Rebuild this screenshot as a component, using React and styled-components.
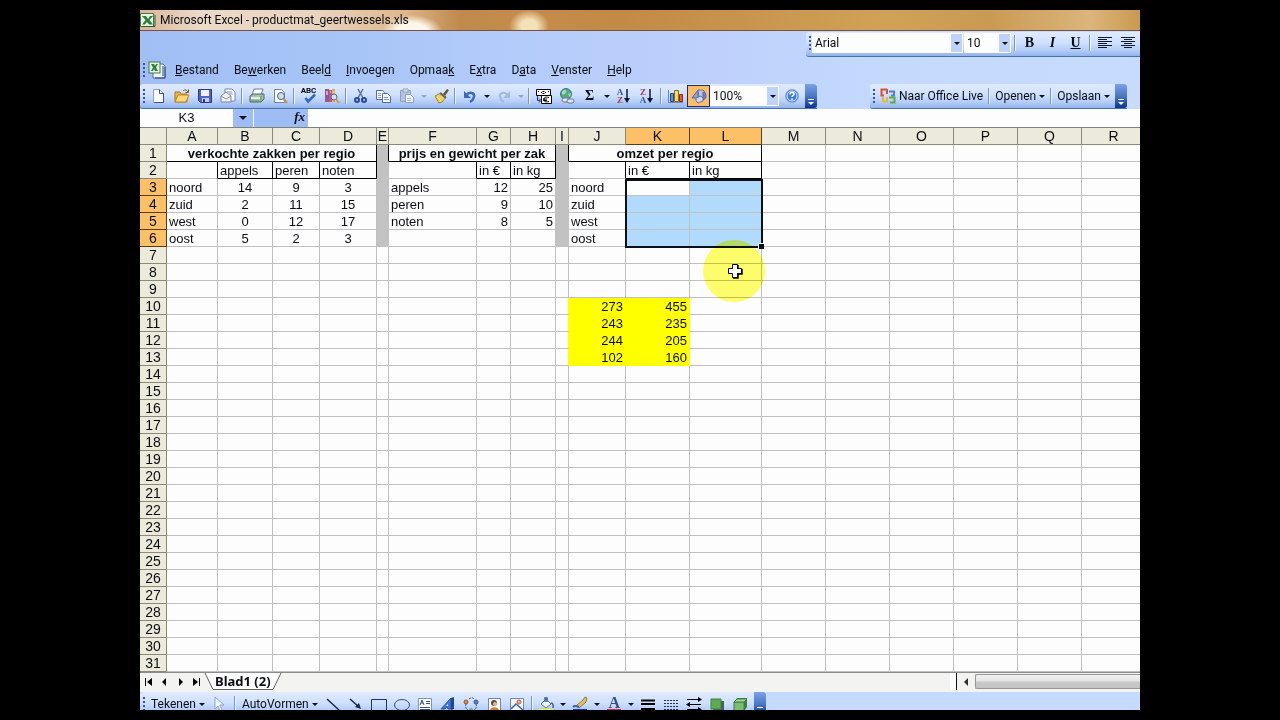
import React from 'react';
import styled, { createGlobalStyle, css } from 'styled-components';

const UI_FONT = "Roboto, 'Open Sans', sans-serif";
const SHEET_FONT = "'Liberation Sans', Arial, sans-serif";

const GlobalStyle = createGlobalStyle`
  *, *::before, *::after {
    box-sizing: border-box;
  }
  body {
    margin: 0;
    background: #000;
    font-family: ${UI_FONT};
    font-size: 12px;
    color: #0a0e14;
  }
  button, input, select {
    font: inherit;
    color: inherit;
    margin: 0;
    padding: 0;
    border: 0;
    background: none;
  }
`;

// Window
const Screen = styled.div`
  height: 100vh;
  padding: 10px 140px;
`;

const Window = styled.main`
  display: flex;
  flex-direction: column;
  height: 100%;
  overflow: hidden;
  background: #fdfdfd;
`;

const TitleBar = styled.header`
  display: flex;
  align-items: center;
  gap: 4px;
  flex: none;
  height: 21px;
  border-bottom: 1px solid #7a5140;
  background:
    radial-gradient(ellipse 30px 16px at 272px 21px, #fdf6ea 50%, transparent),
    radial-gradient(ellipse 20px 16px at 389px 16px, #f3e2b8 40%, transparent),
    linear-gradient(90deg, #d9b596 0, #ecdac8 60px, #e9d3bd 180px, #dfb98f 260px, #bf8a4c 320px, #c48c4c 370px, #c38a45 480px, #c8944d 60%, #d0a257 75%, #c99a52 85%, #dcb57c 95%, #c9994f 100%);
`;

const Title = styled.h1`
  margin: 0;
  font-size: 12px;
  font-weight: 400;
  line-height: 20px;
  white-space: nowrap;
`;

const Commands = styled.div`
  flex: none;
  background: linear-gradient(90deg, #a1bff4 0, #a8c5f7 22%, #b4ccfa 38%, #bdcffb 55%, #c4dafd 75%, #c6dbfd 100%);
`;

const FormatRow = styled.div`
  display: flex;
  justify-content: flex-end;
  height: 27px;
  padding-top: 1px;
`;

const MenuRow = styled.nav`
  display: flex;
  align-items: center;
  height: 26px;
  padding: 0 0 2px 3px;
`;

const MenuButton = styled.button`
  padding: 0 7px 0 8px;
  line-height: 20px;
  white-space: nowrap;
`;

const BookIcon = styled.span`
  display: flex;
  margin: 0 1px 0 3px;
`;

const ToolRow = styled.div`
  display: flex;
  justify-content: space-between;
  height: 25px;
  padding-right: 13px;
`;

const Toolbar = styled.div`
  display: flex;
  align-items: center;
  flex: none;
  height: 25px;
  padding: ${p => (p.$floating ? '0 1px 2px 3px' : '0 0 0 3px')};
  border-radius: 3px 0 0 3px;
  border-bottom: 1px solid #4a70b4;
  background: linear-gradient(180deg, #dfeafe 0, #cfe0fd 45%, #b4cdf8 75%, #92b3ec 100%);
`;

const DrawBar = styled.div`
  flex: none;
  height: 18px;
  overflow: hidden;
  display: flex;
  align-items: flex-start;
  background: #c5dafc;
`;

const Grip = styled.span`
  flex: none;
  width: 2px;
  height: 15px;
  margin-right: ${p => p.$after || 0}px;
  background: repeating-linear-gradient(180deg, #34559c 0 2px, transparent 2px 4px);
`;

const ToolButton = styled.button`
  display: flex;
  align-items: center;
  justify-content: center;
  flex: none;
  width: 23px;
  height: 22px;
  ${p => p.$active && css`
    border: 1px solid #1a2c74;
    background: #fdbd69;
  `}
`;

const DropButton = styled.button`
  display: flex;
  align-items: center;
  justify-content: center;
  flex: none;
  width: 11px;
  height: 20px;
`;

const TextButton = styled.button`
  display: flex;
  align-items: center;
  gap: 3px;
  padding: 0 ${p => p.$pad || 3}px;
  line-height: 14px;
  white-space: nowrap;
`;

const Separator = styled.span`
  flex: none;
  width: 6px;
  height: 16px;
  background: linear-gradient(90deg, transparent 2px, #7595ce 2px 3px, #f0f5ff 3px 4px, transparent 4px);
`;

const EndCap = styled.button`
  display: flex;
  align-items: flex-end;
  justify-content: center;
  align-self: stretch;
  width: 12px;
  margin-left: 2px;
  padding-bottom: 2px;
  border-radius: 0 3px 3px 0;
  background: linear-gradient(180deg, #7ba2e7 0, #4b77c4 50%, #0d3488 100%);
`;

const Combo = styled.span`
  display: flex;
  width: ${p => p.$width}px;
  height: 20px;
  margin-right: 1px;
  background: #fdfdfd;
  border: 1px solid #fdfdfd;
`;

const ComboInput = styled.input`
  flex: 1;
  min-width: 0;
  padding-left: 2px;
  line-height: 18px;
`;

const ComboArrow = styled.button`
  display: flex;
  align-items: center;
  justify-content: center;
  width: 11px;
  background: #bdd3fa;
`;

const Letter = styled.span`
  font-family: 'Liberation Serif', serif;
  font-size: 14px;
  line-height: 16px;
  font-weight: 700;
  font-style: ${p => (p.$italic ? 'italic' : 'normal')};
  text-decoration: ${p => (p.$underline ? 'underline' : 'none')};
`;

// Formula bar
const FormulaBar = styled.div`
  display: flex;
  flex: none;
  height: 18px;
  background: #9fbdf5;
`;

const NameBox = styled.input`
  width: 93px;
  padding-bottom: 2px;
  background: #fdfdfd;
  font-family: ${SHEET_FONT};
  font-size: 13px;
  text-align: center;
`;

const NameArrow = styled.button`
  display: flex;
  align-items: center;
  justify-content: center;
  width: 21px;
  border-right: 1px solid #f4f8ff;
`;

const FxButton = styled.button`
  width: 54px;
  padding: 0 3px 2px 0;
  text-align: right;
  font-family: 'Liberation Serif', serif;
  font-size: 13px;
  font-style: italic;
  font-weight: 700;
  line-height: 16px;
`;

const FormulaInput = styled.input`
  flex: 1;
  min-width: 0;
  background: #fdfdfd;
  padding: 0 4px;
`;

// Sheet
const Sheet = styled.section`
  position: relative;
  flex: 1;
  min-height: 0;
  overflow: hidden;
  border-top: 1px solid #808078;
`;

const Grid = styled.table`
  table-layout: fixed;
  width: 100%;
  border-collapse: separate;
  border-spacing: 0;
  font-family: ${SHEET_FONT};
  font-size: 13px;
  line-height: 14px;
`;

const HeadCell = styled.th`
  height: 17px;
  padding: 0;
  font-size: 14px;
  font-weight: 400;
  line-height: 16px;
  text-align: center;
  border-right: 1px solid #8a8a7c;
  border-bottom: 1px solid #8a8a7c;
  background: #ecebdb;
  ${p => p.$on && css`
    background: #fcc167;
    border-color: #5a3c14;
  `}
`;

const fills = {
  gray: '#c2c2c2',
  yellow: '#ffff00',
  selected: '#b2dafc',
};

const Cell = styled.td`
  position: relative;
  height: 17px;
  padding: 2px 2px 0;
  overflow: visible;
  white-space: nowrap;
  text-align: ${p => p.$align || 'left'};
  font-weight: ${p => (p.$title ? 700 : 400)};
  background: ${p => fills[p.$fill] || '#fdfdfd'};
  border-right: 1px solid ${p => p.$right};
  border-bottom: 1px solid ${p => p.$bottom};
`;

const frame = '2px solid #0c1018';

// Each selected cell draws only the outer sides it lies on
const SelectionEdge = styled.span`
  position: absolute;
  z-index: 1;
  top: 0;
  left: -1px;
  right: ${p => (p.$side === 'right' ? -2 : -1)}px;
  bottom: ${p => (p.$last ? -2 : -1)}px;
  pointer-events: none;
  border-left: ${p => (p.$side === 'left' ? frame : 'none')};
  border-right: ${p => (p.$side === 'right' ? frame : 'none')};
  border-top: ${p => (p.$first ? frame : 'none')};
  border-bottom: ${p => (p.$last ? frame : 'none')};
`;

const FillHandle = styled.span`
  position: absolute;
  z-index: 2;
  right: -3px;
  bottom: -3px;
  width: 6px;
  height: 6px;
  background: #0c1030;
  border-top: 1px solid #fdfdfd;
  border-left: 1px solid #fdfdfd;
`;

const Spotlight = styled.div`
  position: absolute;
  z-index: 3;
  left: 563px;
  top: 112px;
  width: 62px;
  height: 62px;
  border-radius: 50%;
  background: #ffff6c;
  mix-blend-mode: multiply;
`;

const Pointer = styled.svg`
  position: absolute;
  z-index: 4;
  left: 587px;
  top: 135px;
`;

// Sheet tabs
const TabBar = styled.div`
  display: flex;
  flex: none;
  height: 20px;
  padding-bottom: 2px;
  border-top: 1px solid #8c8c8c;
  background: #f3f3f2;
`;

const TabNav = styled.button`
  display: flex;
  align-items: center;
  justify-content: center;
  width: 16px;
`;

const TabStrip = styled.div`
  display: flex;
  flex: 1;
  min-width: 0;
  border-right: 6px solid #fdfdfd;
`;

const Tab = styled.button`
  padding: 0 1px;
  background: #fdfdfd;
  border-bottom: 1px solid #606060;
  font-family: 'Noto Sans', sans-serif;
  font-size: 13px;
  font-weight: 700;
  line-height: 16px;
  white-space: nowrap;
`;

const ScrollArea = styled.div`
  display: flex;
  width: 184px;
  border-left: 1px solid #101010;
`;

const ScrollArrow = styled.button`
  display: flex;
  align-items: center;
  justify-content: center;
  width: 18px;
`;

const ScrollThumb = styled.div`
  flex: 1;
  margin: 1px 0;
  border: 1px solid #979797;
  border-right: 0;
  border-radius: 2px 0 0 2px;
  background: linear-gradient(180deg, #f2f2f2 0, #e4e4e4 48%, #cacaca 52%, #c4c4c4 100%);
`;

// Small arrow shared by every drop-down
const Down = ({ color = '#0a1020', size = 6 }) => (
  <svg width={size} height={size / 2} viewBox="0 0 6 3" aria-hidden="true">
    <path d="M0 0h6L3 3z" fill={color} />
  </svg>
);

const CapMark = () => (
  <svg width="8" height="8" viewBox="0 0 8 8" aria-hidden="true">
    <path d="M1 1.500h6" stroke="#fff" />
    <path d="M1 4h6L4 7z" fill="#fff" />
  </svg>
);

const icons = {
  excel: (
    <>
      <path d="M.5 1.500h13v13H.5z" fill="#eaf4e6" stroke="#3f7d45" />
      <path d="M2 4h4l2 3 2-3h3L9.500 8l3.500 4.500H9L7 10l-2 2.500H2L5.500 8z" fill="#2b8038" />
      <path d="M2 14.500h13V3" fill="none" stroke="#2c5c34" />
    </>
  ),
  book: (
    <>
      <path d="M5 3h10l2 2v12H5z" fill="#eef3fd" stroke="#5271a8" />
      <path d="M15 5v10M17 6v11H7" stroke="#27467c" fill="none" />
      <rect x="1" y="1" width="11" height="11" fill="#e6f3e2" stroke="#3f7d45" />
      <path d="M3 3h3l1 2 1-2h2L8 6.500 10 10H7L6 8l-1 2H3l2-3.500z" fill="#2b8038" />
    </>
  ),
  newDoc: (
    <>
      <path d="M2.500 1.500h6l4 4v9h-10z" fill="#fff" stroke="#8aa0c8" />
      <path d="M8.500 1.500v4h4M12.500 5v9.500h-9" fill="none" stroke="#33548e" />
    </>
  ),
  open: (
    <>
      <path d="M1 4h5l1 2h6v8H1z" fill="#e9b54a" stroke="#a87824" />
      <path d="M1 14l3-7h11l-3 7z" fill="#ffd978" stroke="#b98527" />
      <path d="M9 3c2-2 4-1 5 1M14.500 1.500v3h-3" fill="none" stroke="#7a4d1c" />
    </>
  ),
  save: (
    <>
      <path d="M1.500 1.500h13v13h-11l-2-2z" fill="#5264c4" stroke="#2c3684" />
      <path d="M4 2h8v6H4z" fill="#eef2ff" />
      <path d="M5 10h7v4H5z" fill="#c6cdea" />
      <path d="M6 11h2v3H6z" fill="#2c3684" />
    </>
  ),
  mail: (
    <>
      <path d="M5 1h7l3 3v9H5z" fill="#fff" stroke="#7187ad" />
      <path d="M1 8l5-4 5 4v6H1z" fill="#f5f0e8" stroke="#7187ad" />
      <path d="M1 8l5 3 5-3M7 4h5M9 6h4" fill="none" stroke="#8a93a8" />
    </>
  ),
  print: (
    <>
      <path d="M5 1h9l-2 6H3z" fill="#fff" stroke="#6d7f8c" />
      <path d="M1 8l3-2h11v5l-3 3H1z" fill="#a9c0b0" stroke="#4c6468" />
      <path d="M2 9h9v2H2z" fill="#e7efe6" />
      <path d="M2 13h8M12 8v5" stroke="#4aa14a" />
    </>
  ),
  preview: (
    <>
      <path d="M2.500 1.500h7l3 3v10h-10z" fill="#fff" stroke="#6f86b4" />
      <circle cx="9" cy="8" r="3.500" fill="#cfdff0" stroke="#51617c" />
      <path d="M11.500 11l3.500 4" stroke="#c98f4c" strokeWidth="2" />
    </>
  ),
  spell: <path d="M4 8l3 4 8-8" fill="none" stroke="#3468c8" strokeWidth="3" />,
  research: (
    <>
      <path d="M1 1h4v13H1z" fill="#8a5a9a" />
      <path d="M5 2h3v12H5z" fill="#c5567a" />
      <path d="M8 1h3v13H8z" fill="#d7b25c" />
      <path d="M2 4h2M2 6h2M6 4h1M9 4h1" stroke="#fff" />
      <circle cx="10" cy="9" r="3" fill="#cfe0f2" stroke="#586884" />
      <path d="M12 11l3 4" stroke="#d09a40" strokeWidth="2" />
    </>
  ),
  cut: (
    <>
      <path d="M5 1l5 9M10 1L5 10" stroke="#5c7297" strokeWidth="1.500" />
      <circle cx="4" cy="12" r="2" fill="none" stroke="#28489c" strokeWidth="2" />
      <circle cx="11" cy="12" r="2" fill="none" stroke="#28489c" strokeWidth="2" />
    </>
  ),
  copy: (
    <>
      <path d="M.5 2.500h6l2 2v7h-8z" fill="#fff" stroke="#4d6ba6" />
      <path d="M6.500 5.500h5l3 3v6h-8z" fill="#fff" stroke="#4d6ba6" />
      <path d="M2 5.500h3M2 7.500h3M2 9.500h3M8 9.500h4M8 11.500h5" stroke="#7c9ad0" />
    </>
  ),
  paste: (
    <>
      <path d="M1.500 2.500h10v11h-10z" fill="#b6c3de" stroke="#8f9fc0" />
      <path d="M4 1h5v3H4z" fill="#dbe3f3" stroke="#8f9fc0" />
      <path d="M6.500 6.500h5l3 3v5h-8z" fill="#edf2fc" stroke="#8f9fc0" />
      <path d="M8 10.500h4M8 12.500h4" stroke="#a7b4d0" />
    </>
  ),
  brush: (
    <>
      <path d="M10 6l4-5 2 1-4 6z" fill="#6b5530" />
      <path d="M2 8l6-3 5 4-4 5-3 1z" fill="#f2d257" stroke="#a98520" />
      <path d="M7 5l6 5" stroke="#596380" strokeWidth="2" />
      <path d="M4 9l4 4" stroke="#fff3b0" />
    </>
  ),
  undo: (
    <>
      <path d="M4 7c4-4 9-2 8 2-.5 2-2 4-4 5" fill="none" stroke="#3a68c6" strokeWidth="2.500" />
      <path d="M2 3v7h7z" fill="#3a68c6" />
    </>
  ),
  redo: (
    <>
      <path d="M12 7c-4-4-9-2-8 2 .5 2 2 4 4 5" fill="none" stroke="#a2b8de" strokeWidth="2" />
      <path d="M14 3v7H7z" fill="#a2b8de" />
    </>
  ),
  euro: (
    <>
      <path d="M.5 1.500h14v6H.5z" fill="#fff" stroke="#000" />
      <path d="M5 4.500h1M9 4.500h1M6.500 3.500h2M6.500 5.500h2M2 3.500h1M12 3.500h1" stroke="#000" />
      <path d="M5.500 7.500h10v8h-10z" fill="#fff" stroke="#000" />
      <path d="M13 9.500c-4-1-5 0-5 2s1 3 5 2M7 11h4M7 12.500h4" fill="none" stroke="#000" />
      <path d="M1.500 8v4.500H4M3 10.500l2 2-2 2" fill="none" stroke="#1c2f9c" />
    </>
  ),
  link: (
    <>
      <circle cx="7" cy="6" r="5.500" fill="#5aa882" stroke="#37759a" />
      <path d="M3 4c2-3 5-2 4 0s-2 3-4 2zM9 6l3-1-1 4z" fill="#a9dfb0" />
      <rect x="3" y="10" width="7" height="4" rx="2" fill="#dfe6f2" stroke="#6b7b98" />
      <rect x="8" y="11" width="7" height="4" rx="2" fill="#dfe6f2" stroke="#6b7b98" />
    </>
  ),
  chart: (
    <>
      <path d="M.5 2v12.500H15" fill="none" stroke="#7085a8" />
      <path d="M2.500 5.500h3v8h-3z" fill="#5d8de0" stroke="#274a94" />
      <path d="M6.500 2.500h4v11h-4z" fill="#f6dc5e" stroke="#8a6e14" />
      <path d="M11.500 6.500h3v7h-3z" fill="#e05a3c" stroke="#8c2c18" />
    </>
  ),
  drawing: (
    <>
      <path d="M1 10l6-8v8z" fill="#8fa4dc" stroke="#5467a4" />
      <path d="M7 2h5l2 2v6H8z" fill="#b9c4dc" stroke="#6675a0" />
      <path d="M12 4c4 1 4 7 0 8z" fill="#6f87cc" stroke="#5467a4" />
      <path d="M5 10l5-2 2 2v3l-5 2-2-2z" fill="#cfd7ec" stroke="#6675a0" />
    </>
  ),
  help: (
    <>
      <circle cx="8" cy="8" r="6.500" fill="#3f7ddc" stroke="#8aa8dc" />
      <circle cx="8" cy="8" r="5" fill="none" stroke="#dce9ff" />
      <path d="M6 6.500c0-3 4-2.500 4-.5 0 1.500-2 1.500-2 3M8 10.500v1.500" fill="none" stroke="#fff" strokeWidth="1.500" />
    </>
  ),
  office: (
    <>
      <path d="M7 1.500H1.500v6H4M7 1v5" fill="none" stroke="#e0502c" strokeWidth="2" />
      <path d="M9 3.500h5v4h-3" fill="none" stroke="#4784d4" strokeWidth="2" />
      <path d="M3 9v4.500h4V9" fill="none" stroke="#eab83a" strokeWidth="2" />
      <path d="M9 9.500h5.500v5H10" fill="none" stroke="#62a944" strokeWidth="2" />
    </>
  ),
  left: <path d="M1 2.500h14M1 4.500h9M1 6.500h14M1 8.500h9M1 10.500h14M1 12.500h9" stroke="#10182c" />,
  center: <path d="M1 2.500h14M4 4.500h8M1 6.500h14M4 8.500h8M1 10.500h14M4 12.500h8" stroke="#10182c" />,
  cursor: <path d="M3 1v12l3-3 2 5 2-1-2-5h4z" fill="#f2f6ff" stroke="#8ea3cc" />,
  line: <path d="M2 3l12 11" stroke="#1c2740" strokeWidth="1.500" />,
  arrow: (
    <>
      <path d="M2 3l9 8" stroke="#1c2740" strokeWidth="1.500" />
      <path d="M13 13l-6-2 4-4z" fill="#1c2740" />
    </>
  ),
  rect: <path d="M.5 3.500h15v11H.5z" fill="none" stroke="#1c3468" />,
  ellipse: <ellipse cx="8" cy="9" rx="7.500" ry="5.500" fill="none" stroke="#3a4c78" />,
  textbox: (
    <>
      <path d="M1.500 2.500h13v12h-13z" fill="#fff" stroke="#8295bd" />
      <path d="M3 9l2-5 2 5M4 7h2M9 5.500h4M9 7.500h4M3 11.500h10M3 13.500h10" fill="none" stroke="#33528e" />
    </>
  ),
  wordart: (
    <>
      <path d="M1 13L11 2v11H8l-1-2-2 2z" fill="#3f79dc" stroke="#2451a4" />
      <path d="M11 2l3-1v12l-3 1z" fill="#23468c" />
      <path d="M8 8v2H6z" fill="#dce9ff" />
    </>
  ),
  diagram: (
    <>
      <path d="M6 3c2-1.500 4-1.500 5 0M3 8c-1 3 0 5 2 6M13 8c1 3 0 5-2 6" fill="none" stroke="#35558f" strokeDasharray="2 1" />
      <circle cx="3" cy="6" r="2" fill="#e58c54" stroke="#90502a" />
      <circle cx="13" cy="6" r="2" fill="#5d83c6" stroke="#33528e" />
      <circle cx="8" cy="14" r="2" fill="#79b06a" />
    </>
  ),
  person: (
    <>
      <path d="M2.500 2.500h12v13h-12z" fill="#fff" stroke="#6f86b4" />
      <circle cx="8" cy="7" r="3" fill="#5c5048" />
      <circle cx="9" cy="8" r="2" fill="#e8b98c" />
      <path d="M4 15c0-5 9-5 9 0z" fill="#dc7a2c" />
    </>
  ),
  picture: (
    <>
      <path d="M1.500 2.500h13v12h-13z" fill="#f2f7ff" stroke="#6f86b4" />
      <circle cx="10" cy="6" r="2" fill="#f0ac7c" stroke="#d05a3c" />
      <path d="M2 13l5-5 7 6" fill="none" stroke="#3a62ae" strokeWidth="1.500" />
    </>
  ),
  fill: (
    <>
      <path d="M3 8l5-5 5 5-5 4z" fill="#f2f6ff" stroke="#566e9c" />
      <path d="M7 6V2h2v4M13 7c3 0 2 4 2 5" fill="none" stroke="#3c609f" strokeWidth="1.500" />
      <path d="M1 13h14v3H1z" fill="#ffff00" />
    </>
  ),
  pen: (
    <>
      <path d="M4 10l7-6 2-3 2 1-1 4-7 6z" fill="#e7c25c" stroke="#8f7a3c" />
      <path d="M1 11c2-2 4-1 6 0" fill="none" stroke="#3d63b0" strokeWidth="2" />
      <path d="M1 13h14v3H1z" fill="#1533c8" />
    </>
  ),
  fontColor: <path d="M1 13h14v3H1z" fill="#e0283c" />,
  weights: <path d="M1 4.500h14M1 8h14M1 13h14" stroke="#000" strokeWidth="2" />,
  dashes: <path d="M1 4.500h14M1 7.500h14M1 10.500h14M1 13.500h14" stroke="#24304c" strokeDasharray="2 1" />,
  arrows: (
    <>
      <path d="M1 3.500h12M3 8.500h12M1 13.500h12" stroke="#000" />
      <path d="M12 1l4 2.500L12 6zM4 6L0 8.500 4 11zM12 11l4 2.500-4 2z" fill="#000" />
    </>
  ),
  shadow: (
    <>
      <path d="M4 5h11v10H4z" fill="#4d5e54" />
      <path d="M2 3h10v10H2z" fill="#5caa54" stroke="#3a8044" />
    </>
  ),
  cube: (
    <>
      <path d="M2 6l3-4h10v9l-3 4H2z" fill="#3f8146" />
      <path d="M2 6h10v10H2z" fill="#7dbd6c" stroke="#3a8044" />
      <path d="M2 6l3-3h10l-3 3z" fill="#a8d898" stroke="#3a8044" />
    </>
  ),
};

const Icon = ({ name, size = 16 }) => {
  const box = name === 'book' ? 18 : 16;
  return (
    <svg width={size} height={size} viewBox={`0 0 ${box} ${box}`} fill="none" aria-hidden="true">
      {icons[name]}
    </svg>
  );
};

const SpellStack = styled.span`
  display: flex;
  flex-direction: column;
  align-items: center;
  font-size: 8px;
  font-weight: 700;
  line-height: 7px;
  svg {
    margin-top: -3px;
  }
`;

const SortGlyph = styled.span`
  display: flex;
  align-items: center;
  gap: 1px;
`;

const SortLetters = styled.span`
  display: grid;
  font-family: 'Liberation Serif', serif;
  font-size: 9px;
  font-weight: 700;
  line-height: 8px;
  color: #35569c;
  .z {
    color: #a03c50;
  }
`;

const FontColorGlyph = styled.span`
  display: grid;
  justify-items: center;
  > * {
    grid-area: 1 / 1;
  }
  font-family: 'Liberation Serif', serif;
  font-size: 16px;
  font-weight: 700;
  line-height: 14px;
  color: #34508c;
`;

const Sort = ({ letters }) => (
  <SortGlyph>
    <SortLetters>
      {letters.split('').map(l => (
        <span key={l} className={l === 'Z' ? 'z' : undefined}>{l}</span>
      ))}
    </SortLetters>
    <svg width="6" height="14" viewBox="0 0 6 14" aria-hidden="true">
      <path d="M3 0v11" stroke="#101828" strokeWidth="1.500" />
      <path d="M0 9h6l-3 5z" fill="#101828" />
    </svg>
  </SortGlyph>
);

const Tool = ({ name, label, active, children }) => (
  <ToolButton $active={active} aria-label={label || name}>
    {children || <Icon name={name} />}
  </ToolButton>
);

const Drop = ({ label, muted }) => (
  <DropButton aria-label={label}>
    <Down color={muted ? '#8fa6d0' : undefined} />
  </DropButton>
);

const menus = [
  ['', 'B', 'estand'],
  ['Be', 'w', 'erken'],
  ['Beel', 'd', ''],
  ['', 'I', 'nvoegen'],
  ['Opmaa', 'k', ''],
  ['E', 'x', 'tra'],
  ['D', 'a', 'ta'],
  ['', 'V', 'enster'],
  ['', 'H', 'elp'],
];

const columns = [
  ['A', 51], ['B', 55], ['C', 47], ['D', 57], ['E', 12], ['F', 88], ['G', 34], ['H', 45], ['I', 13],
  ['J', 57], ['K', 64], ['L', 72], ['M', 64], ['N', 64], ['O', 64], ['P', 64], ['Q', 64], ['R', 64],
];

const rowCount = 31;

const values = {
  A1: 'verkochte zakken per regio', F1: 'prijs en gewicht per zak', J1: 'omzet per regio',
  B2: 'appels', C2: 'peren', D2: 'noten', G2: 'in €', H2: 'in kg', K2: 'in €', L2: 'in kg',
  A3: 'noord', B3: 14, C3: 9, D3: 3, F3: 'appels', G3: 12, H3: 25, J3: 'noord',
  A4: 'zuid', B4: 2, C4: 11, D4: 15, F4: 'peren', G4: 9, H4: 10, J4: 'zuid',
  A5: 'west', B5: 0, C5: 12, D5: 17, F5: 'noten', G5: 8, H5: 5, J5: 'west',
  A6: 'oost', B6: 5, C6: 2, D6: 3, J6: 'oost',
  J10: 273, K10: 455,
  J11: 243, K11: 235,
  J12: 244, K12: 205,
  J13: 102, K13: 160,
};

const spans = { A1: 4, F1: 3, J1: 3 };
const covered = ['B1', 'C1', 'D1', 'G1', 'H1', 'K1', 'L1'];
const blackRight = ['A1', 'E1', 'F1', 'I1', 'J1', 'A2', 'B2', 'C2', 'D2', 'F2', 'G2', 'H2', 'J2', 'K2', 'L2'];
const blackBottom = ['A1', 'F1', 'J1', 'B2', 'C2', 'D2', 'G2', 'H2', 'K2', 'L2'];

const isSelected = (col, row) => 'KL'.includes(col) && row >= 3 && row <= 6;

const fillOf = (col, row) => {
  if ('EI'.includes(col) && row <= 6) return 'gray';
  if ('JK'.includes(col) && row >= 10 && row <= 13) return 'yellow';
  if (isSelected(col, row) && !(col === 'K' && row === 3)) return 'selected';
  return undefined;
};

const alignOf = (col, value) => {
  if (typeof value !== 'number') return 'left';
  return 'BCD'.includes(col) ? 'center' : 'right';
};

// A filled block also covers the grid line on its left
const rightLine = (col, row) => {
  const fill = fillOf(col, row);
  if (blackRight.includes(`${col}${row}`)) return '#000';
  if (col === 'I' && row >= 10 && row <= 13) return fills.yellow;
  return fill === 'gray' || fill === 'yellow' ? fills[fill] : '#c0c0c0';
};

const bottomLine = (col, row) => {
  const fill = fillOf(col, row);
  if (blackBottom.includes(`${col}${row}`)) return '#000';
  return fill === 'gray' || fill === 'yellow' ? fills[fill] : '#c0c0c0';
};

const SheetCell = ({ col, row }) => {
  const id = `${col}${row}`;
  return (
    <Cell
      colSpan={spans[id]}
      $title={row === 1}
      $align={spans[id] ? 'center' : alignOf(col, values[id])}
      $fill={fillOf(col, row)}
      $right={rightLine(col, row)}
      $bottom={bottomLine(col, row)}
    >
      {values[id]}
      {isSelected(col, row) && (
        <SelectionEdge $side={col === 'K' ? 'left' : 'right'} $first={row === 3} $last={row === 6} />
      )}
      {id === 'L6' && <FillHandle />}
    </Cell>
  );
};

const Spreadsheet = () => (
  <Sheet>
    <Grid>
      <colgroup>
        <col style={{ width: 27 }} />
        {columns.map(([name, width]) => <col key={name} style={{ width }} />)}
      </colgroup>
      <thead>
        <tr>
          <HeadCell aria-label="Alles selecteren" />
          {columns.map(([name]) => (
            <HeadCell key={name} scope="col" $on={'KL'.includes(name)}>{name}</HeadCell>
          ))}
        </tr>
      </thead>
      <tbody>
        {Array.from({ length: rowCount }, (_, i) => i + 1).map(row => (
          <tr key={row}>
            <HeadCell scope="row" $on={row >= 3 && row <= 6}>{row}</HeadCell>
            {columns
              .filter(([name]) => !covered.includes(`${name}${row}`))
              .map(([name]) => <SheetCell key={name} col={name} row={row} />)}
          </tr>
        ))}
      </tbody>
    </Grid>
    <Spotlight />
    <Pointer width="16" height="16" viewBox="0 0 16 16" aria-hidden="true">
      <path d="M5.500 1.500h5v4h4v5h-4v4h-5v-4h-4v-5h4z" fill="#fff" stroke="#000" />
      <path d="M11 2v4M15 6v5h-4v4H6" fill="none" stroke="#000" strokeWidth="1.500" />
    </Pointer>
  </Sheet>
);

const FormattingToolbar = () => (
  <Toolbar $floating>
    <Grip $after={1} />
    <Combo $width={151}>
      <ComboInput aria-label="Lettertype" defaultValue="Arial" />
      <ComboArrow aria-label="Lettertype kiezen"><Down /></ComboArrow>
    </Combo>
    <Combo $width={47}>
      <ComboInput aria-label="Tekengrootte" defaultValue="10" />
      <ComboArrow aria-label="Tekengrootte kiezen"><Down /></ComboArrow>
    </Combo>
    <Separator />
    <Tool label="Vet"><Letter>B</Letter></Tool>
    <Tool label="Cursief"><Letter $italic>I</Letter></Tool>
    <Tool label="Onderstrepen"><Letter $underline>U</Letter></Tool>
    <Separator />
    <Tool name="left" />
    <Tool name="center" />
  </Toolbar>
);

const StandardToolbar = () => (
  <Toolbar>
    <Grip $after={2} />
    <Tool name="newDoc" />
    <Tool name="open" />
    <Tool name="save" />
    <Tool name="mail" />
    <Separator />
    <Tool name="print" />
    <Tool name="preview" />
    <Separator />
    <Tool label="Spelling">
      <SpellStack>ABC<Icon name="spell" size={14} /></SpellStack>
    </Tool>
    <Tool name="research" />
    <Separator />
    <Tool name="cut" />
    <Tool name="copy" />
    <Tool name="paste" />
    <Drop label="Plakopties" muted />
    <Tool name="brush" />
    <Separator />
    <Tool name="undo" />
    <Drop label="Ongedaan maken" />
    <Tool name="redo" />
    <Drop label="Opnieuw" muted />
    <Separator />
    <Tool name="euro" />
    <Tool name="link" />
    <Tool label="AutoSom"><Letter>Σ</Letter></Tool>
    <Drop label="Functies" />
    <Tool label="Oplopend sorteren"><Sort letters="AZ" /></Tool>
    <Tool label="Aflopend sorteren"><Sort letters="ZA" /></Tool>
    <Separator />
    <Tool name="chart" />
    <Tool name="drawing" active />
    <Combo $width={69}>
      <ComboInput aria-label="In- en uitzoomen" defaultValue="100%" />
      <ComboArrow aria-label="Zoom kiezen"><Down /></ComboArrow>
    </Combo>
    <Tool name="help" />
    <EndCap aria-label="Werkbalkopties"><CapMark /></EndCap>
  </Toolbar>
);

const OfficeLiveToolbar = () => (
  <Toolbar>
    <Grip $after={2} />
    <TextButton><Icon name="office" />Naar Office Live</TextButton>
    <Separator />
    <TextButton>Openen <Down /></TextButton>
    <Separator />
    <TextButton>Opslaan <Down /></TextButton>
    <EndCap aria-label="Werkbalkopties"><CapMark /></EndCap>
  </Toolbar>
);

const DrawingToolbar = () => (
  <DrawBar>
    <Toolbar>
      <Grip $after={2} />
      <TextButton $pad={4}>Tekenen <Down /></TextButton>
      <Tool name="cursor" />
      <Separator />
      <TextButton $pad={4}>AutoVormen <Down /></TextButton>
      <Tool name="line" />
      <Tool name="arrow" />
      <Tool name="rect" />
      <Tool name="ellipse" />
      <Tool name="textbox" />
      <Tool name="wordart" />
      <Tool name="diagram" />
      <Tool name="person" />
      <Tool name="picture" />
      <Separator />
      <Tool name="fill" />
      <Drop label="Opvulkleur" />
      <Tool name="pen" />
      <Drop label="Lijnkleur" />
      <Tool label="Tekstkleur">
        <FontColorGlyph><span>A</span><Icon name="fontColor" /></FontColorGlyph>
      </Tool>
      <Drop label="Tekstkleur kiezen" />
      <Tool name="weights" />
      <Tool name="dashes" />
      <Tool name="arrows" />
      <Tool name="shadow" />
      <Tool name="cube" />
      <EndCap aria-label="Werkbalkopties"><CapMark /></EndCap>
    </Toolbar>
  </DrawBar>
);

const navShapes = [
  ['Eerste blad', 'M1 0h1v8H1zM8 0v8L3 4z'],
  ['Vorig blad', 'M6 0v8L2 4z'],
  ['Volgend blad', 'M3 0v8l4-4z'],
  ['Laatste blad', 'M7 0h1v8H7zM1 0v8l5-4z'],
];

const SheetTabs = () => (
  <TabBar>
    {navShapes.map(([label, d]) => (
      <TabNav key={label} aria-label={label}>
        <svg width="9" height="8" viewBox="0 0 9 8" aria-hidden="true">
          <path d={d} fill="#000" />
        </svg>
      </TabNav>
    ))}
    <TabStrip>
      <svg width="10" height="17" viewBox="0 0 10 17" aria-hidden="true">
        <path d="M1 0l8 16.500h1V0z" fill="#fdfdfd" />
        <path d="M1 0l8 16.500h1" fill="none" stroke="#606060" />
      </svg>
      <Tab>Blad1 (2)</Tab>
      <svg width="10" height="17" viewBox="0 0 10 17" aria-hidden="true">
        <path d="M9 0L1 16.500H0V0z" fill="#fdfdfd" />
        <path d="M9 0L1 16.500H0" fill="none" stroke="#606060" />
      </svg>
    </TabStrip>
    <ScrollArea>
      <ScrollArrow aria-label="Naar links">
        <svg width="4" height="8" viewBox="0 0 4 8" aria-hidden="true"><path d="M4 0v8L0 4z" fill="#303030" /></svg>
      </ScrollArrow>
      <ScrollThumb />
    </ScrollArea>
  </TabBar>
);

const App = () => (
  <Screen>
    <GlobalStyle />
    <Window>
      <TitleBar>
        <Icon name="excel" />
        <Title>Microsoft Excel - productmat_geertwessels.xls</Title>
      </TitleBar>
      <Commands>
        <FormatRow>
          <FormattingToolbar />
        </FormatRow>
        <MenuRow>
          <Grip />
          <BookIcon><Icon name="book" size={18} /></BookIcon>
          {menus.map(([before, key, after]) => (
            <MenuButton key={before + key + after}>{before}<u>{key}</u>{after}</MenuButton>
          ))}
        </MenuRow>
        <ToolRow>
          <StandardToolbar />
          <OfficeLiveToolbar />
        </ToolRow>
      </Commands>
      <FormulaBar>
        <NameBox aria-label="Naamvak" defaultValue="K3" />
        <NameArrow aria-label="Naam kiezen"><Down size={8} /></NameArrow>
        <FxButton aria-label="Functie invoegen">fx</FxButton>
        <FormulaInput aria-label="Formulebalk" />
      </FormulaBar>
      <Spreadsheet />
      <SheetTabs />
      <DrawingToolbar />
    </Window>
  </Screen>
);

export default App;
